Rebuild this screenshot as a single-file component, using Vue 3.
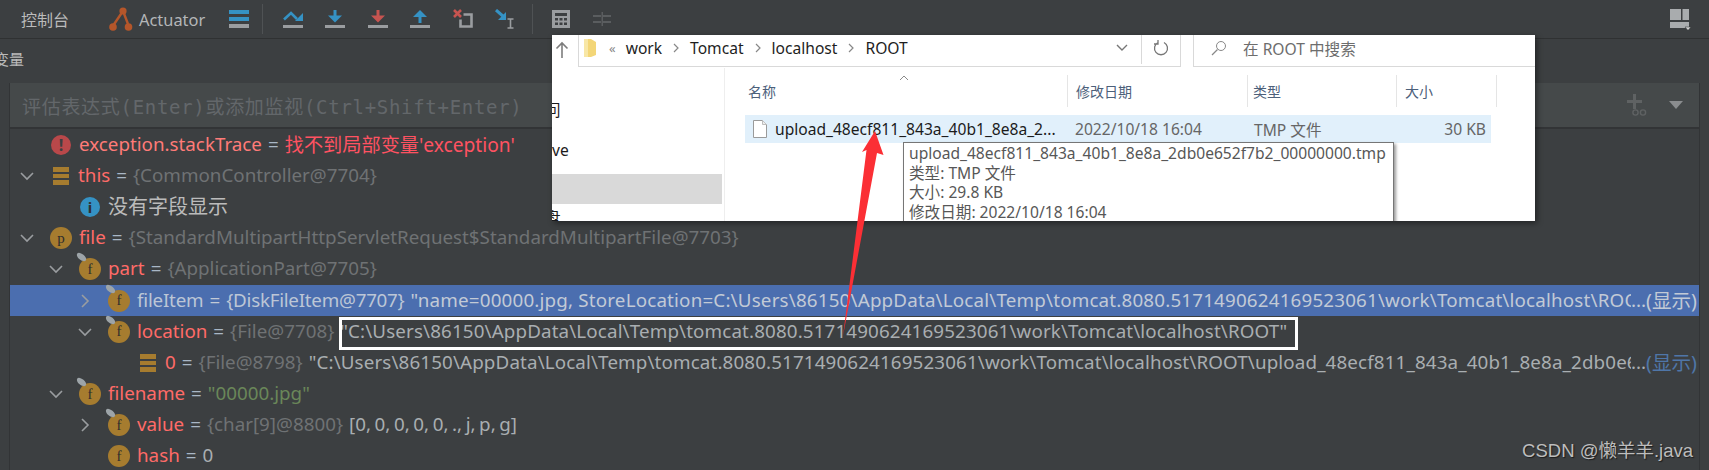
<script setup>
const longPath = 'C:\\Users\\86150\\AppData\\Local\\Temp\\tomcat.8080.5171490624169523061\\work\\Tomcat\\localhost\\ROOT'
const rows = [
  { level: 0, icon: 'error', name: 'exception.stackTrace', error: "找不到局部变量'exception'" },
  { level: 0, chev: 'down', icon: 'stack', name: 'this', ref: '{CommonController@7704}' },
  { level: 1, icon: 'info', note: '没有字段显示' },
  { level: 0, chev: 'down', icon: 'p', name: 'file', ref: '{StandardMultipartHttpServletRequest$StandardMultipartFile@7703}' },
  { level: 1, chev: 'down', icon: 'f', pin: true, name: 'part', ref: '{ApplicationPart@7705}' },
  { level: 2, chev: 'right', icon: 'f', pin: true, name: 'fileItem', ref: '{DiskFileItem@7707}', val: '"name=00000.jpg, StoreLocation=' + longPath, dots: true, sel: true },
  { level: 2, chev: 'down', icon: 'f', pin: true, name: 'location', ref: '{File@7708}', val: '"' + longPath + '"' },
  { level: 3, icon: 'stack', name: '0', ref: '{File@8798}', val: '"' + longPath + '\\upload_48ecf811_843a_40b1_8e8a_2db0e652f7b2_00000000.tmp"', dots: true },
  { level: 1, chev: 'down', icon: 'f', pin: true, name: 'filename', str: '"00000.jpg"' },
  { level: 2, chev: 'right', icon: 'f', pin: true, name: 'value', ref: '{char[9]@8800}', val: '[0, 0, 0, 0, 0, ., j, p, g]', narrow: true },
  { level: 2, icon: 'f', name: 'hash', val: '0', narrow: true },
]
const indent = (l) => ({ paddingLeft: 7 + l * 29 + 'px' })
const path = ['work', 'Tomcat', 'localhost', 'ROOT']
</script>

<template>
  <div class="ide">
    <header class="toolbar">
      <span class="tab">控制台</span>
      <svg class="act" viewBox="0 0 24 24" width="24" height="24"><path d="M14 4 3.500 19.500M14 4l5 13" stroke="#b5562a" stroke-width="2.400" fill="none"/><circle cx="14" cy="4" r="3.600" fill="#b5562a"/><circle cx="4" cy="20" r="3.800" fill="#b5562a"/><circle cx="19.500" cy="20" r="3.800" fill="#b5562a"/></svg>
      <span class="act-label">Actuator</span>
      <div class="icons">
        <svg class="ti lines" viewBox="0 0 20 20"><path d="M0 1h20v4H0zM0 8h20v4H0z" fill="#3592c4"/><path d="M0 15h20v4H0z" fill="#9a9da0"/></svg>
        <i class="sep first"></i>
        <svg class="ti" viewBox="0 0 20 20"><path d="M1 10.500 8 4l6 6" fill="none" stroke="#3592c4" stroke-width="2.600"/><path d="M20 4v8h-8z" fill="#3592c4"/><path d="M0 16h20v3H0z" fill="#9a9da0"/></svg>
        <svg class="ti" viewBox="0 0 20 20"><path d="M8.500 1h3v6h-3z" fill="#3592c4"/><path d="M3 6.500h14L10 13.500z" fill="#3592c4"/><path d="M0 16h20v3H0z" fill="#9a9da0"/></svg>
        <svg class="ti" viewBox="0 0 20 20"><path d="M8.500 1h3v6h-3z" fill="#c75450"/><path d="M3 6.500h14L10 13.500z" fill="#c75450"/><path d="M0 16h20v3H0z" fill="#9a9da0"/></svg>
        <svg class="ti" viewBox="0 0 20 20"><path d="M8.500 7h3v7h-3z" fill="#3592c4"/><path d="M3 8h14L10 1z" fill="#3592c4"/><path d="M0 16h20v3H0z" fill="#9a9da0"/></svg>
        <svg class="ti" viewBox="0 0 20 20"><path d="M1 1l7 7M8 1 1 8" stroke="#c75450" stroke-width="2.600"/><path d="M10 6h8v12H7v-7" fill="none" stroke="#9a9da0" stroke-width="2.600" transform="translate(.5 -.5)"/></svg>
        <svg class="ti" viewBox="0 0 20 20"><path d="M1 1l8 7" stroke="#3592c4" stroke-width="3"/><path d="M11 3v8H3z" fill="#3592c4"/><path d="M12.500 10h6M12.500 19h6M15.500 10v9" stroke="#9a9da0" stroke-width="1.600" fill="none"/></svg>
        <i class="sep second"></i>
        <svg class="ti calc" viewBox="0 0 20 20"><path d="M1 1h18v18H1z" fill="#9a9da0"/><path d="M4 4h12v3H4zM4 9h3v2.500H4zM8.500 9h3v2.500h-3zM13 9h3v2.500h-3zM4 13.500h3V16H4zM8.500 13.500h3V16h-3zM13 13.500h3V16h-3z" fill="#3c3f41"/></svg>
        <svg class="ti dim" viewBox="0 0 20 20"><path d="M1 6h8v2H1zM1 12h8v2H1zM11 6h8v2h-8zM11 12h8v2h-8zM9.500 3h1.500v14H9.500z" fill="#5a5d5f"/></svg>
      </div>
      <svg class="layout" viewBox="0 0 22 22" width="22" height="22"><path d="M1 1h11v11H1zM13.500 1H20v11h-6.500zM1 14h19v6H1z" fill="#a9acae"/><path d="M16 19h6l-3 3.500z" fill="#d0d0d0" stroke="#3c3f41" stroke-width=".6"/></svg>
    </header>

    <div class="body">
      <div class="panel-title"><span>变量</span></div>
      <div class="main">
        <div class="eval">
          <span class="hint">评估表达式(Enter)或添加监视(Ctrl+Shift+Enter)</span>
          <svg class="watch" viewBox="0 0 22 24" width="22" height="24"><path d="M7 1h3v6h6v3h-6v6H7v-6H1V7h6z" fill="#5f6263"/><circle cx="9.500" cy="19.500" r="2.600" fill="none" stroke="#5f6263" stroke-width="1.400"/><circle cx="17" cy="19.500" r="2.600" fill="none" stroke="#5f6263" stroke-width="1.400"/></svg>
          <i class="eval-drop"></i>
        </div>
        <div class="tree">
          <div v-for="(r, i) in rows" :key="i" class="row" :class="{ sel: r.sel }" :style="indent(r.level)">
            <span class="chev">
              <svg v-if="r.chev === 'down'" viewBox="0 0 20 20" width="20" height="20"><path d="M4 7l6 6 6-6" fill="none" stroke="#9a9da0" stroke-width="1.600"/></svg>
              <svg v-else-if="r.chev === 'right'" viewBox="0 0 20 20" width="20" height="20"><path d="M7 4l6 6-6 6" fill="none" stroke="#9a9da0" stroke-width="1.600"/></svg>
            </span>
            <span class="node" :class="'n-' + r.icon">
              <template v-if="r.icon === 'stack'">
                <i></i><i></i><i></i>
              </template>
              <template v-else-if="r.icon === 'error'">!</template>
              <template v-else-if="r.icon === 'info'">i</template>
              <template v-else>{{ r.icon }}</template>
              <b v-if="r.pin" class="pin"></b>
            </span>
            <span v-if="r.note" class="note">{{ r.note }}</span>
            <template v-else>
              <span class="name">{{ r.name }}</span>
              <span class="eq">=</span>
              <span v-if="r.error" class="err">{{ r.error }}</span>
              <span v-if="r.str" class="str">{{ r.str }}</span>
              <span v-if="r.ref" class="ref">{{ r.ref }}</span>
              <span v-if="r.val" class="val" :class="{ clip: r.dots, narrow: r.narrow }">{{ r.val }}</span>
              <template v-if="r.dots">
                <span class="dots">...</span><span class="show">(显示)</span>
              </template>
            </template>
          </div>
        </div>
      </div>
      <div class="right-strip"></div>
    </div>

    <section class="explorer">
      <div class="ex-top">
        <svg class="up" viewBox="0 0 14 18" width="14" height="18"><path d="M7 17V2M1.500 7.500 7 2l5.500 5.500" fill="none" stroke="#7d7d7d" stroke-width="1.600"/></svg>
        <div class="addr">
          <svg class="folder" viewBox="0 0 12 20" width="12" height="20"><path d="M0 1h7l5 3v13l-5 2H0z" fill="#f3d678"/><path d="M0 1h4v18H0z" fill="#f8e7a6"/></svg>
          <span class="crumb-more">«</span>
          <template v-for="(p, i) in path" :key="p">
            <span class="crumb">{{ p }}</span>
            <svg v-if="i < path.length - 1" class="crumb-sep" viewBox="0 0 6 10" width="6" height="10"><path d="M1 1l4 4-4 4" fill="none" stroke="#888" stroke-width="1.200"/></svg>
          </template>
          <svg class="addr-drop" viewBox="0 0 12 8" width="12" height="8"><path d="M1 1l5 5 5-5" fill="none" stroke="#777" stroke-width="1.400"/></svg>
          <span class="refresh"><svg viewBox="0 0 16 18" width="16" height="18"><path d="M5 3.500a6.500 6.500 0 1 0 6 0M5 1v4H1" fill="none" stroke="#777" stroke-width="1.300"/></svg></span>
        </div>
        <div class="search">
          <svg viewBox="0 0 16 16" width="16" height="16"><circle cx="10" cy="6" r="4.500" fill="none" stroke="#888" stroke-width="1"/><path d="M6.500 9.500 1 15" stroke="#888" stroke-width="1.200"/></svg>
          <span>在 ROOT 中搜索</span>
        </div>
      </div>
      <div class="ex-body">
        <aside class="side">
          <span class="s1">问</span>
          <span class="s2">ve</span>
          <span class="s3"></span>
          <span class="s4">盘</span>
        </aside>
        <div class="list">
          <svg class="sort" viewBox="0 0 10 6" width="10" height="6"><path d="M1 5l4-4 4 4" fill="none" stroke="#8a8a8a"/></svg>
          <div class="cols">
            <span class="c1">名称</span><span class="c2">修改日期</span><span class="c3">类型</span><span class="c4">大小</span>
          </div>
          <div class="file">
            <svg viewBox="0 0 14 18" width="14" height="18"><path d="M.500.500h9l4 4v13H.500z" fill="#fff" stroke="#9a9a9a"/><path d="M9.500.500v4h4" fill="#eee" stroke="#bdbdbd"/></svg>
            <span class="fname">upload_48ecf811_843a_40b1_8e8a_2...</span>
            <span class="fdate">2022/10/18 16:04</span>
            <span class="ftype">TMP 文件</span>
            <span class="fsize">30 KB</span>
          </div>
        </div>
      </div>
      <div class="tip">
        <div>upload_48ecf811_843a_40b1_8e8a_2db0e652f7b2_00000000.tmp</div>
        <div>类型: TMP 文件</div>
        <div>大小: 29.8 KB</div>
        <div>修改日期: 2022/10/18 16:04</div>
      </div>
    </section>

    <div class="mark"></div>
    <svg class="arrow" viewBox="0 0 1709 470" width="1709" height="470"><path d="M875 131 883.500 155 877 153 843 336 866.500 150 862 152z" fill="#fb2f35"/></svg>
    <div class="watermark">CSDN @懒羊羊.java</div>
  </div>
</template>

<style>
html, body { margin: 0; background: #3c3f41; overflow: hidden; }
</style>

<style scoped>
.ide { position: relative; width: 1709px; height: 470px; background: #3c3f41; color: #bbb; font-family: "Noto Sans", "Noto Sans CJK SC", sans-serif; overflow: hidden; display: flex; flex-direction: column; }
.toolbar { height: 38px; flex: none; display: flex; align-items: center; border-bottom: 1px solid #2f3132; position: relative; }
.tab { margin-left: 21px; font-size: 16px; color: #bbb; width: 88px; }
.act { margin-right: 6px; }
.act-label { font-size: 16.400px; color: #b4b6b8; width: 90px; white-space: nowrap; }
.icons { display: flex; align-items: center; }
.ti { width: 20px; height: 20px; margin-right: 22.500px; flex: none; }
.lines { margin-right: 16.500px; }
.sep { width: 1px; height: 30px; background: #4f5254; flex: none; }
.sep.first { margin: 0 20px 0 -4px; }
.sep.second { margin: 0 18px 0 -6px; }
.calc { margin-right: 21px; }
.layout { margin-left: auto; margin-right: 18px; }
.body { flex: 1; display: grid; grid-template-columns: 1fr 10px; grid-template-rows: 44px 1fr; min-height: 0; }
.panel-title { grid-column: 1 / 3; font-size: 15px; display: flex; align-items: center; margin-left: -6px; color: #bbb; padding-bottom: 6px; }
.main { margin-left: 9px; border-left: 1px solid #323436; min-width: 0; display: flex; flex-direction: column; }
.right-strip { border-left: 1px solid #323436; }
.eval { height: 44px; background: #45494a; border-bottom: 2px solid #323436; display: flex; align-items: center; flex: none; }
.hint { font-family: "DejaVu Sans Mono", "Noto Sans CJK SC", monospace; font-size: 19px; letter-spacing: .7px; color: #63676a; margin-left: 12px; white-space: nowrap; }
.watch { margin-left: auto; margin-right: 3.500px; }
.eval-drop { width: 0; height: 0; border: 7px solid transparent; border-top: 8px solid #8a8d8f; border-bottom: 0; margin-right: 16px; margin-left: 18px; }
.tree { flex: 1; min-height: 0; }
.row { height: 31.200px; display: flex; align-items: center; font-size: 18.800px; white-space: nowrap; padding-right: 2px; padding-bottom: 2px; box-sizing: border-box; }
.row.sel { background: #4b6eaf; }
.chev { width: 33px; flex: none; display: flex; align-items: center; margin-top: 2px; }
.node { position: relative; width: 22px; height: 22px; flex: none; margin-right: 7px; margin-top: 2px; border-radius: 50%; display: flex; align-items: center; justify-content: center; font-size: 15px; color: #2d2d2d; font-family: "Liberation Serif", serif; background: #a67c2f; }
.n-stack { border-radius: 0; background: none; flex-direction: column; gap: 2px; width: 17px; margin: 2px 9px 0 2px; }
.n-stack i { display: block; width: 16px; height: 4.500px; background: #a67c2f; }
.n-error { background: #b9484a; font-family: "Noto Sans", sans-serif; font-weight: 700; font-size: 16px; color: #3c3f41; width: 20px; height: 20px; margin: 2px 8px 0 1px; }
.n-info { background: #3592c4; font-weight: 700; font-family: "Noto Sans", sans-serif; color: #2f3132; width: 20px; height: 20px; margin: 2px 8px 0 1px; }
.pin { position: absolute; top: -4px; left: -3px; width: 11px; height: 6px; border-radius: 50%; background: #9da4a8; transform: rotate(40deg); }
.name { color: #ff6b68; margin-right: 6px; }
.n-error + .name { color: #ff7b78; }
.eq { color: #a9b7c6; margin-right: 6px; }
.err { color: #ff5261; font-size: 19.200px; }
.note { color: #bbb; font-size: 20px; }
.ref { color: #6f7274; margin-right: 6px; }
.val { color: #a9aeb1; letter-spacing: .13px; }
.val.narrow { letter-spacing: 0; word-spacing: -1.300px; }
.val.clip { flex: 1; min-width: 0; overflow: hidden; }
.dots { color: #a9aeb1; }
.show { color: #4f76a8; font-size: 19.600px; }
.sel .ref, .sel .val, .sel .dots, .sel .show, .sel .eq { color: #c2cad6; }
.sel .ref { color: #bcc6d6; letter-spacing: -.25px; }
.sel .name { color: #bcc6d6; letter-spacing: -.2px; }
.sel .val { letter-spacing: .18px; }
.str { color: #6a8759; }
.explorer { position: absolute; left: 552px; top: 35px; width: 983px; height: 186px; background: #fff; box-shadow: 2px 2px 6px rgba(0,0,0,.45); color: #1b1b1b; font-size: 15.600px; overflow: hidden; display: flex; flex-direction: column; }
.ex-top { height: 33px; flex: none; display: flex; padding-left: 3px; box-sizing: border-box; }
.up { margin: 6px 9px 0 0; flex: none; }
.addr { width: 603px; flex: none; height: 32px; border: 1px solid #d9d9d9; border-top: 0; box-sizing: border-box; display: flex; align-items: center; padding-left: 5px; padding-bottom: 5px; }
.folder { margin-right: 13px; }
.crumb-more { color: #888; margin-right: 10px; font-size: 13px; }
.crumb { color: #1e1e1e; }
.crumb-sep { margin: 0 11px; }
.addr-drop { margin-left: auto; margin-right: 13px; }
.refresh { width: 38px; height: 32px; border-left: 1px solid #d9d9d9; display: flex; align-items: center; justify-content: center; }
.search { margin-left: 12px; flex: 1; height: 32px; border: 1px solid #d9d9d9; border-width: 0 0 1px 1px; box-sizing: border-box; display: flex; align-items: center; padding: 0 0 5px 17px; gap: 16px; color: #6d6d6d; }
.ex-body { flex: 1; display: flex; min-height: 0; }
.side { width: 172px; flex: none; border-right: 1px solid #eee; display: flex; flex-direction: column; }
.s1, .s2, .s4 { display: block; height: 20px; line-height: 20px; }
.s1 { margin-left: -7px; margin-top: 32px; }
.s2 { margin-top: 20px; height: 23px; }
.s3 { display: block; width: 170px; height: 30px; background: #d9d9d9; flex: none; margin-top: 14px; }
.s4 { margin-left: -7px; margin-top: 4px; }
.list { flex: 1; position: relative; padding-left: 20px; }
.sort { position: absolute; left: 174px; top: 7px; }
.cols { display: flex; height: 32px; margin-top: 7px; font-size: 14px; color: #4c607a; align-items: center; }
.cols span { height: 100%; display: flex; align-items: center; box-sizing: border-box; padding-left: 8px; border-right: 1px solid #e5e5e5; }
.c1 { width: 323px; padding-left: 3px !important; }
.c2 { width: 180px; }
.c3 { width: 149px; padding-left: 5px !important; }
.c4 { width: 100px; }
.file { height: 28px; width: 746px; background: #e1f0fb; margin-top: 8px; display: flex; align-items: center; padding-left: 8px; box-sizing: border-box; white-space: nowrap; }
.file svg { flex: none; margin-right: 8px; }
.fname { width: 300px; color: #1b1b1b; }
.fdate { width: 179px; color: #666; }
.ftype { width: 150px; color: #666; }
.fsize { flex: 1; text-align: right; padding-right: 5px; color: #666; }
.tip { position: absolute; left: 351px; top: 107px; width: 491px; height: 90px; background: #fff; border: 1px solid #767676; box-shadow: 2px 2px 3px rgba(0,0,0,.4); padding: 1px 5px; box-sizing: border-box; color: #575757; font-size: 15.600px; line-height: 19.700px; white-space: nowrap; }
.mark { position: absolute; left: 339px; top: 317px; width: 959px; height: 33px; border: 3px solid #fff; box-sizing: border-box; }
.arrow { position: absolute; left: 0; top: 0; pointer-events: none; }
.watermark { position: absolute; right: 16px; top: 436px; font-family: "Liberation Sans", "Noto Sans CJK SC", sans-serif; font-size: 18.500px; color: #bdbdbd; text-shadow: 1px 1px 1px #1d1d1d; white-space: nowrap; }
</style>
